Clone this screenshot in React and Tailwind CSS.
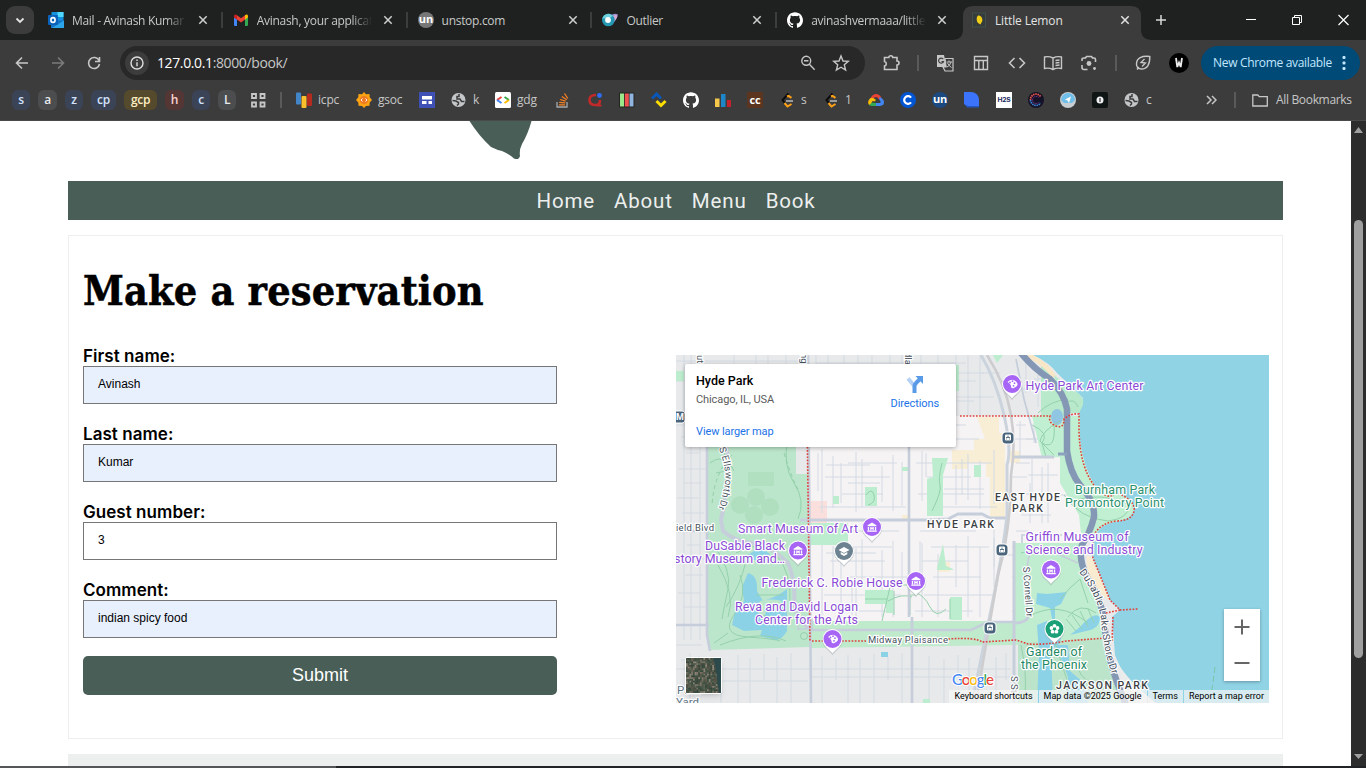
import React from "react";
import { SiGithub } from "react-icons/si";

const ui = "font-['Open_Sans',sans-serif]";

function Close({ bright }) {
  return (
    <svg width="10" height="10" viewBox="0 0 10 10" className="flex-none">
      <path d="M1.300 1.300L8.700 8.700M8.700 1.300L1.300 8.700" stroke={bright ? "#e3e3e3" : "#cfd1d0"} strokeWidth="1.500" />
    </svg>
  );
}

function Outlook() {
  return (
    <svg width="16" height="16" viewBox="0 0 16 16">
      <rect x="3.500" y="0" width="12" height="10" fill="#1490df" />
      <rect x="9.500" y="0" width="6" height="5" fill="#50d9ff" />
      <path d="M3 8.500h13V16H3z" fill="#1572c4" />
      <path d="M4 16L16 8.500V16z" fill="#2ba6ea" />
      <rect x="0" y="3" width="10" height="10" rx="1" fill="#0a62bd" />
      <ellipse cx="5" cy="8" rx="2.100" ry="2.400" fill="none" stroke="#fff" strokeWidth="1.600" />
    </svg>
  );
}
function Gmail() {
  return (
    <svg width="16" height="16" viewBox="0 0 16 16">
      <path d="M1 5v8Q1 14 2 14h2V7z" fill="#4285f4" />
      <path d="M15 5v8q0 1-1 1h-2V7z" fill="#34a853" />
      <path d="M4 3.200L8 6.200l4-3V7.500L8 10.500 4 7.500z" fill="#ea4335" />
      <path d="M12 3.200C13.500 2 15 2.600 15 4.300V5.500l-3 2.200z" fill="#fbbc04" />
      <path d="M4 3.200C2.500 2 1 2.600 1 4.300V5.500l3 2.200z" fill="#c5221f" />
    </svg>
  );
}
function Un({ bg }) {
  return (
    <svg width="16" height="16" viewBox="0 0 16 16">
      <circle cx="8" cy="8" r="8" fill={bg} />
      <text x="8" y="10.700" textAnchor="middle" fontFamily="Open Sans, sans-serif" fontWeight="700" fontSize="11" fill="#fff">un</text>
    </svg>
  );
}
function Outlier() {
  return (
    <svg width="16" height="16" viewBox="0 0 16 16">
      <path d="M8 4Q12 1 15.500 2.200 17 4 10 13z" fill="#9d93cf" />
      <path d="M11 4q3-1.500 4-.5t-2 5z" fill="#d7a8d0" />
      <circle cx="6.300" cy="8" r="6.300" fill="#2497b3" />
      <path d="M.4 6.500A6.300 6.300 0 0 1 11 3.700L8 6z" fill="#6fd0de" />
      <circle cx="6" cy="8" r="2.900" fill="#fff" />
    </svg>
  );
}
function Lemon() {
  return (
    <svg width="16" height="16" viewBox="0 0 16 16" className="flex-none">
      <rect x="1.500" y="1" width="13" height="14" fill="#363b3b" stroke="#41504d" strokeWidth="1" />
      <path d="M7 3.500c3.500 0 4.500 2.500 4.300 5.500L9.500 12.500 7 11C5.500 9 5 5.500 7 3.500z" fill="#f2cf17" />
    </svg>
  );
}

const tabs = [
  { icon: <Outlook />, title: "Mail - Avinash Kumar" },
  { icon: <Gmail />, title: "Avinash, your applicat" },
  { icon: <Un bg="#777" />, title: "unstop.com", noFade: true },
  { icon: <Outlier />, title: "Outlier", noFade: true },
  { icon: <SiGithub size={16} color="#fff" />, title: "avinashvermaaa/little" },
];

function TabStrip() {
  return (
    <div className="flex h-10 bg-[#1f2120]">
      <div className="flex w-[38px] flex-none items-center pl-1.5">
        <div className="flex h-7 w-7 items-center justify-center rounded-[9px] bg-[#3c3c3c]">
          <svg width="10" height="7" viewBox="0 0 10 7"><path d="M1.500 1.500L5 5l3.500-3.500" fill="none" stroke="#e3e3e3" strokeWidth="1.800" /></svg>
        </div>
      </div>
      {tabs.map((t, i) => (
        <div key={i} className="flex w-[184.8px] flex-none items-center pl-2.5">
          <div className="flex h-4 w-4 flex-none items-center">{t.icon}</div>
          <div className={"ml-2 w-[115px] flex-none overflow-hidden pt-px text-[12px] tracking-[-0.3px] whitespace-nowrap text-[#c7c9c8] " + (t.noFade ? "" : "[mask-image:linear-gradient(to_right,black_82%,transparent)]")}>{t.title}</div>
          <div className="ml-[11px] flex w-[10px]"><Close /></div>
          <div className={"ml-auto h-4 w-[2px] " + (i < 4 ? "bg-[#3c3d3d]" : "")} />
        </div>
      ))}
      <div className="flex w-[184.5px] flex-none items-end">
        <svg width="184" height="34" viewBox="0 0 184 34" className="-mr-[184px] flex-none overflow-visible">
          <path d="M-10 34Q1 34 1 23V10Q1 0 11 0H169Q179 0 179 10V23Q179 34 190 34Z" fill="#3c3c3c" />
        </svg>
        <div className="relative flex h-[34px] w-full items-center pb-1.5 pl-[9px]">
          <Lemon />
          <div className="ml-2 w-[125px] pt-px text-[12px] tracking-[-0.15px] text-[#e3e3e3]">Little Lemon</div>
          <Close bright />
        </div>
      </div>
      <div className="flex flex-1 items-center pl-[10px]">
        <svg width="10" height="10" viewBox="0 0 10 10"><path d="M5 0v10M0 5h10" stroke="#d8d8d8" strokeWidth="1.500" /></svg>
        <svg width="104" height="12" viewBox="0 0 104 12" className="ml-[80px]" fill="none" stroke="#fff">
          <path d="M0 5.500h10" />
          <path d="M46.500 3.500h7v7h-7zM48.500 3.500v-2h7v7h-2" />
          <path d="M92.500 1l10 10M102.500 1l-10 10" strokeWidth="1.200" />
        </svg>
      </div>
    </div>
  );
}

function Icon({ children, size = 18, color = "#c7c7c7", className = "" }) {
  return (
    <svg width={size} height={size} viewBox="0 0 18 18" fill="none" stroke={color} strokeWidth="1.600" className={"flex-none " + className}>{children}</svg>
  );
}

function Toolbar() {
  return (
    <div className="flex h-[46px] items-center bg-[#3c3c3c]">
      <Icon className="ml-[13px]"><path d="M15 9H4M9 3.500L3.500 9 9 14.500" /></Icon>
      <Icon className="ml-[18px]" color="#7b7b7b"><path d="M3 9h11M9 3.500l5.500 5.500L9 14.500" /></Icon>
      <Icon className="ml-[18px]"><path d="M14 6.500A5.500 5.500 0 1 0 14.500 10M14.500 3v4.500H10" /></Icon>
      <div className="ml-[17px] flex h-[34px] w-[745px] flex-none items-center rounded-full bg-[#282828]">
        <div className="ml-[5px] flex h-6 w-6 items-center justify-center rounded-full bg-[#3c3c3c]">
          <svg width="14" height="14" viewBox="0 0 14 14" fill="none" stroke="#dedede" strokeWidth="1.400"><circle cx="7" cy="7" r="6" /><path d="M7 6.200v4M7 3.600v1.400" /></svg>
        </div>
        <div className="ml-2 pb-px text-[14px] tracking-[-0.38px] text-[#c7c7c7]"><span className="text-white">127.0.0.1</span>:8000/book/</div>
        <Icon className="ml-auto" size={16}><circle cx="7" cy="6.500" r="5" /><path d="M10.500 10.500L16.500 16.500M4.500 6.500h5" /></Icon>
        <Icon className="mr-[15px] ml-[16px]"><path d="M9 2l2 5 5.300.300-4 3.500 1.300 5.200L9 13.200 4.400 16l1.300-5.200-4-3.500L7 7z" strokeWidth="1.400" /></Icon>
      </div>
      <Icon className="ml-[17px]"><path d="M2.500 3.500h4.300a2 1.800 0 0 1 4 0H15V7a2 2 0 0 1 0 4v4.500H2.500V12a2.300 2.300 0 0 0 0-4.500z" /></Icon>
      <div className="ml-[17px] h-4 w-[2px] bg-[#5a5a5a]" />
      <svg width="18" height="18" viewBox="0 0 18 18" className="ml-[17px] flex-none">
        <path d="M1 1h7l2.500 12H1z" fill="#c7c7c7" /><path d="M9 4.500h8V17H9L7 13h3z" fill="none" stroke="#c7c7c7" strokeWidth="1.200" />
        <path d="M7.200 5.200A2.500 2.500 0 1 0 7.500 7.500H5.500" fill="none" stroke="#3c3c3c" strokeWidth="1.200" />
        <path d="M10.500 8h5.500M13 6.500V8M15 8q-1 4-4 5M11.500 9q1.500 3 4 4.500" fill="none" stroke="#c7c7c7" />
      </svg>
      <Icon className="ml-[18px]"><path d="M2.500 2.500h13v13h-13zM2.500 6.500h13M6.800 6.500v9M11.300 6.500v9" strokeWidth="1.400" /></Icon>
      <Icon className="ml-[18px]"><path d="M6.500 4L1.500 9l5 5M11.500 4l5 5-5 5" /></Icon>
      <svg width="20" height="18" viewBox="0 0 20 18" fill="none" stroke="#c7c7c7" strokeWidth="1.400" className="ml-[17px] flex-none"><path d="M10 4Q6 2 1.500 3v11.500Q6 13.500 10 15.500 14 13.500 18.500 14.500V3Q14 2 10 4zM10 4v11M12.500 6.500l4-.5M12.500 9l4-.5M12.500 11.500l4-.5" /></svg>
      <Icon className="ml-[17px]"><path d="M2 7V5.500Q2 4 4 4h1.500l1-1.500h5l1 1.500H14q1.500 0 1.500 1.500V8M2 11v2.500Q2 15.500 4 15.500H7.500" /><circle cx="9" cy="9.500" r="2.400" fill="#c7c7c7" stroke="none" /><circle cx="14.500" cy="14.500" r="1.400" fill="#c7c7c7" stroke="none" /></Icon>
      <div className="ml-[17px] h-4 w-[2px] bg-[#5a5a5a]" />
      <Icon className="ml-[17px]"><path d="M15.800 2.500C8 1.500 2.500 4 2.500 10c0 3 2 5 5 5 6 0 8.500-5 8.300-12.500zM3 15.500L5 13" strokeWidth="1.400" /><path d="M10.500 5L7 8.500l4.500 .5L8 12.500" strokeWidth="1.300" /></Icon>
      <svg width="20" height="20" viewBox="0 0 20 20" className="ml-[17px] flex-none"><circle cx="10" cy="10" r="10" fill="#000" /><path d="M7 5l1.300 9L10 9.500l1.700 4.500L13 5" stroke="#eee" strokeWidth="1.800" fill="none" /></svg>
      <div className="ml-3 flex h-[34px] w-[159px] flex-none items-center rounded-full bg-[#004a77] pl-3">
        <span className="w-[125px] text-[12px] tracking-[-0.32px] whitespace-nowrap text-[#c2e7ff]">New Chrome available</span>
        <svg width="4" height="16" viewBox="0 0 4 16" fill="#c2e7ff" className="ml-1"><rect x="0.500" y="1" width="3" height="3" rx="1" /><rect x="0.500" y="6.500" width="3" height="3" rx="1" /><rect x="0.500" y="12" width="3" height="3" rx="1" /></svg>
      </div>
    </div>
  );
}

const chips = [
  ["s", "w-[18px] bg-[#3b4357] text-[#d3e3fd]"],
  ["a", "w-[19px] bg-[#4b4d4e] text-[#e8eaed]"],
  ["z", "w-[18px] bg-[#3b4357] text-[#d3e3fd]"],
  ["cp", "w-[25px] bg-[#3b4357] text-[#d3e3fd]"],
  ["gcp", "w-[33px] bg-[#564a2c] text-[#feefc3]"],
  ["h", "w-[19px] bg-[#543735] text-[#fad2cf]"],
  ["c", "w-[18px] bg-[#3b4357] text-[#d3e3fd]"],
  ["L", "w-[18px] bg-[#4b4d4e] text-[#e8eaed]"],
];

const S = ({ children }) => <svg width="16" height="16" viewBox="0 0 16 16" className="flex-none">{children}</svg>;
const Globe = () => (
  <S><circle cx="7.500" cy="8" r="7" fill="#c4c7c9" /><path d="M1.500 8.500L5 9 7.500 10.500v1.500L6 13.500M8 2v2.500H6V7H9L10.500 9.500H13.500" stroke="#3c3c3c" strokeWidth="1.500" fill="none" /></S>
);
const Leet = () => (
  <S><path d="M9.500 1.500L3.500 8 6 11.500" stroke="#0c0c0c" strokeWidth="2" fill="none" /><path d="M8 4.500l1.500-.7 3 2M5.500 11l3 3.500 4-2.500" stroke="#ffa116" strokeWidth="2" fill="none" /><path d="M7 9h7" stroke="#b3b3b3" strokeWidth="1.600" /></S>
);

const bookmarks = [
  { w: "w-[60px]", t: "icpc", icon: <S><rect x="0" y="0.500" width="5" height="12" rx="1" fill="#4285c9" /><rect x="5.500" y="4" width="5" height="12" rx="1" fill="#fbc12d" /><rect x="11" y="1.500" width="5" height="12.500" rx="1" fill="#b52b1e" /></S> },
  { w: "w-[63px]", t: "gsoc", icon: <S><path d="M8 0l2 2.300 3.500-.300.200 3.300L16 8l-2.300 2.500-.200 3.200-3.500.200L8 16l-2-2.100-3.500-.200-.200-3.200L0 8l2.300-2.700L2.500 2l3.500.300z" fill="#fba313" /><circle cx="8" cy="8" r="4" fill="#ee7b23" /><path d="M6.500 6.500L5 8l1.500 1.500M9.500 6.500L11 8 9.500 9.500" stroke="#fff" fill="none" strokeWidth=".9" /></S> },
  { w: "w-[32px]", icon: <S><rect width="16" height="16" fill="#3f51b5" /><path d="M3 4h10v3.500H3zM3 9h4.500v3H3zM9.500 9H13v3H9.500z" fill="#fff" /></S> },
  { w: "w-[44px]", t: "k", icon: <Globe /> },
  { w: "w-[60px]", t: "gdg", icon: <S><rect width="16" height="16" rx="1.500" fill="#fff" /><path d="M6.500 5L2 8" stroke="#ea4335" strokeWidth="2" /><path d="M2 8l4.500 3" stroke="#4285f4" strokeWidth="2" /><path d="M9.500 5L14 8" stroke="#34a853" strokeWidth="2" /><path d="M14 8l-4.500 3" stroke="#fbbc04" strokeWidth="2" /></S> },
  { w: "w-[33px]", icon: <S><g transform="translate(1 0)"><path d="M1 10v5h10v-5" stroke="#a6a9ab" strokeWidth="1.300" fill="none" /><path d="M3 12.800h6M3.200 10.300l6 .600M4 7.500l5.700 1.700M5.800 4.500l5 3.200M8.500 1.500l3.300 5" stroke="#f48024" strokeWidth="1.300" /></g></S> },
  { w: "w-[31px]", icon: <S><path d="M8 3H6.500Q1.500 3.500 1.500 8T6.500 13H8Q12 13 12 8" fill="none" stroke="#c02a2a" strokeWidth="2.600" /><path d="M9 13.500h4.500" stroke="#c02a2a" strokeWidth="2" /><circle cx="11.500" cy="3.500" r="2.400" fill="#2f6df6" /></S> },
  { w: "w-[32px]", icon: <S><rect x="0" y="0.500" width="15.500" height="15" rx="1" fill="#222" /><rect x="1" y="1.500" width="4" height="13" fill="#9be88a" /><rect x="5.800" y="1.500" width="4" height="13" fill="#f0524f" /><rect x="10.500" y="1.500" width="4" height="13" fill="#8fb5dc" /></S> },
  { w: "w-[32px]", icon: <S><path d="M1 6.500L5.500 2 10 6.500" stroke="#0b57b7" strokeWidth="3" fill="none" /><path d="M5.500 9l4.500 4.500L14.500 9" stroke="#fedd00" strokeWidth="3" fill="none" /></S> },
  { w: "w-[32px]", icon: <SiGithub size={16} color="#fff" /> },
  { w: "w-[32px]", icon: <S><rect x="0" y="6.500" width="4.500" height="8.500" fill="#f5c84b" /><rect x="6" y="2" width="4.500" height="13" fill="#1d86c8" /><rect x="12" y="8" width="4" height="7" fill="#c4232c" /></S> },
  { w: "w-[32px]", icon: <S><rect width="16" height="16" rx="1" fill="#5b351e" /><text x="8" y="11.500" textAnchor="middle" fontSize="11" fontWeight="700" fontFamily="Open Sans, sans-serif" fill="#fff">cc</text></S> },
  { w: "w-[44px]", t: "s", icon: <Leet /> },
  { w: "w-[45px]", t: "1", icon: <Leet /> },
  { w: "w-[32px]", icon: <S><path d="M2.500 6.500Q4 2 8.500 2 12.500 2.500 13.500 6.500L11 7.500Q10 5 8 5 6 5 5 6.500z" fill="#ea4335" /><path d="M11 5.500h1.500Q16 7.500 16 10.500T12 14H8v-3h4Q13.500 10 11.500 8z" fill="#4285f4" /><path d="M8 11v3H4Q2 14 1 13l2-2.500z" fill="#34a853" /><path d="M1 13q-2-3 .500-6T8 8L6.500 9.500Q4 8 3.500 11z" fill="#fbbc04" /></S> },
  { w: "w-[32px]", icon: <S><circle cx="8" cy="8" r="8" fill="#0056d2" /><path d="M11 5.700A3.800 3.800 0 1 0 11 10.300" stroke="#fff" strokeWidth="2.200" fill="none" /></S> },
  { w: "w-[32px]", icon: <Un bg="#1c4980" /> },
  { w: "w-[32px]", icon: <S><path d="M0 0h7a8 8 0 0 1 8 8v6H3L0 12z" fill="#3b74fb" /><path d="M0 12l3 3.500h12V14H4z" fill="#2455c4" /></S> },
  { w: "w-[32px]", icon: <S><rect width="16" height="16" fill="#fff" /><text x="8" y="10" textAnchor="middle" fontSize="6" fontWeight="700" textLength="13" lengthAdjust="spacingAndGlyphs" fontFamily="Inter, sans-serif" fill="#1d2b63">H2S</text></S> },
  { w: "w-[32px]", icon: <S><circle cx="8" cy="8" r="8" fill="#141226" /><path d="M12.500 4.500A5.500 5.500 0 0 0 2.500 8" stroke="#e4554a" strokeWidth="1.800" strokeDasharray="1.500 .7" fill="none" /><path d="M2.500 8a5.500 5.500 0 0 0 10 3" stroke="#3d7fd0" strokeWidth="1.800" strokeDasharray="1.500 .7" fill="none" /><path d="M10.500 5.500A3.500 3.500 0 1 0 10.500 10.500" stroke="#8d3aa8" fill="none" strokeDasharray="1 .7" /></S> },
  { w: "w-[32px]", icon: <S><circle cx="8" cy="8" r="8" fill="#c9ced2" /><path d="M1 8a7 7 0 0 1 14 0L12 11H4z" fill="#6fbfe9" /><path d="M5 7.500l6-3-2 6.500-1.500-2.500z" fill="#fff" /></S> },
  { w: "w-[32px]", icon: <S><rect width="16" height="16" rx="2" fill="#0f1515" /><circle cx="8" cy="8" r="3.500" fill="#f1f1f1" /><path d="M8 6v4" stroke="#333" strokeWidth="1.200" /></S> },
  { w: "w-[82px]", t: "c", icon: <Globe /> },
];

function Bookmarks() {
  return (
    <div className="flex h-[35px] items-center border-b border-[#4a4a4a] bg-[#3c3c3c] pb-[6px] pl-3 text-[12px] tracking-[-0.2px] text-[#c7c7c7]">
      <div className="flex flex-none gap-2">
        {chips.map(([t, c], i) => (
          <div key={i} className={"flex h-5 items-center justify-center rounded-[6px] text-[12px] font-semibold tracking-[-0.3px] " + c}>{t}</div>
        ))}
      </div>
      <svg width="16" height="16" viewBox="0 0 16 16" className="ml-[14px] flex-none" fill="none" stroke="#c7c7c7" strokeWidth="1.800"><path d="M2 2h4v4H2zM10.500 2h4v4h-4zM2 10.500h4v4H2zM10.500 10.500h4v4h-4z" /></svg>
      <div className="mr-[14px] ml-[14px] h-4 w-[2px] flex-none bg-[#5a5a5a]" />
      {bookmarks.map((b, i) => (
        <div key={i} className={"flex h-5 flex-none items-center gap-1.5 " + b.w}>
          {b.icon}
          {b.t && <span>{b.t}</span>}
        </div>
      ))}
      <svg width="11" height="10" viewBox="0 0 11 10" fill="none" stroke="#c7c7c7" strokeWidth="1.500" className="flex-none"><path d="M1 1l4 4-4 4M6 1l4 4-4 4" /></svg>
      <div className="ml-[17px] h-4 w-[2px] flex-none bg-[#5a5a5a]" />
      <svg width="16" height="13" viewBox="0 0 16 13" fill="none" stroke="#c7c7c7" strokeWidth="1.300" className="ml-4 flex-none"><path d="M.8 1h5l1.500 1.700h8V12H.8z" /></svg>
      <span className="ml-2 tracking-[-0.33px] whitespace-nowrap">All Bookmarks</span>
    </div>
  );
}

const museum = "M-4 -1.500L0 -4.200 4 -1.500V-.7H-4zM-3.800 0h1.200v3h-1.200zM2.600 0h1.200v3H2.600zM-4.300 3.200h8.600v1.200h-8.600zM-1.600 0h.9l.7 1 .7-1h.9v3h-.9V1.500l-.7.9-.7-.9V3h-.9z";

function Pin({ x, y, fill = "#a765f5", kind = "museum" }) {
  return (
    <g transform={`translate(${x} ${y})`}>
      <path d="M0 15.500C-2 11 -10.200 8.500 -10.200 0A10.200 10.200 0 0 1 10.200 0C10.200 8.500 2 11 0 15.500Z" fill="#9aa0a6" opacity=".45" transform="translate(0 .8)" />
      <path d="M0 14.500C-2 10.500 -10 8 -10 0A10 10 0 0 1 10 0C10 8 2 10.500 0 14.500Z" fill="#fff" />
      <circle r="9" fill={fill} />
      {kind === "museum" && <path d={museum} fill="#fff" transform="scale(1.1)" />}
      {kind === "art" && <g><path d="M-4.500-2Q0-6 4-2.500T2 4Q-1 5-1 2.500T-4.500-2z" fill="#fff" /><g fill={fill}><circle cx="-2" cy="-1.500" r=".9" /><circle cx="0.500" cy="-2.800" r=".9" /><circle cx="2.500" cy="-.8" r=".9" /><circle cx="1.500" cy="1.800" r=".9" /></g></g>}
      {kind === "school" && <path d="M-5.500-1L0-4l5.500 3L0 2zM-3.300 1v2.200L0 5l3.300-1.800V1L0 2.800z" fill="#fff" />}
      {kind === "flower" && <g fill="#fff"><circle cx="0" cy="-3.200" r="1.900" /><circle cx="3" cy="-1" r="1.900" /><circle cx="1.900" cy="2.700" r="1.900" /><circle cx="-1.900" cy="2.700" r="1.900" /><circle cx="-3" cy="-1" r="1.900" /><circle r="1.300" fill={fill} /></g>}
    </g>
  );
}

function Station({ x, y }) {
  return (
    <g transform={`translate(${x} ${y})`}>
      <rect x="-6.500" y="-6.500" width="13" height="13" rx="4.500" fill="#fff" />
      <rect x="-5.500" y="-5.500" width="11" height="11" rx="3.500" fill="#4b667c" />
      <rect x="-3" y="-3.500" width="6" height="6" rx="1" fill="#fff" />
      <path d="M-2-.5h4M0-2.500v2M-1.800 1h.8M1 1h.8M-2 3.800l1-1M2 3.800l-1-1" stroke="#4b667c" strokeWidth=".9" />
    </g>
  );
}

function L({ x, y, c = "#8a4ad6", s = 12.4, a, w, rot, len, children }) {
  return (
    <text x={x} y={y} fill={c} fontSize={s} textAnchor={a} fontWeight={w} textLength={len} transform={rot}
      stroke="#fff" strokeWidth="2.400" strokeLinejoin="round" paintOrder="stroke">{children}</text>
  );
}

const vWest = [8, 15, 24, 58, 80, 92, 110];
const vTown = [146, 157, 165, 180, 186, 206, 217, 226, 246, 262, 280, 292, 304, 318];
const vSouth = [14, 23, 45, 62, 74, 88, 101, 115, 146, 160, 172, 184, 198, 212, 226, 253, 268, 282, 293, 306, 320, 330];
const hTown = [70, 84, 108, 122, 139, 152, 176, 192, 206, 222, 240, 256];
const hWest = [70, 82, 98, 114, 128, 143, 158, 190, 204, 220, 238, 252, 290, 305, 322, 336];
const cuts = [
  [142, 98, 38, 1], [150, 110, 44, 0], [172, 128, 32, 0], [250, 98, 24, 1], [286, 104, 36, 1], [268, 134, 40, 0],
  [244, 186, 40, 1], [150, 198, 50, 0], [176, 226, 34, 1], [318, 172, 40, 1], [320, 200, 20, 0], [344, 66, 36, 1],
  [350, 84, 22, 0], [358, 68, 20, 1], [352, 120, 30, 0], [356, 104, 46, 1], [366, 112, 56, 1], [382, 140, 12, 0],
  [354, 128, 40, 1], [372, 108, 60, 1], [345, 160, 30, 0], [350, 8, 30, 1], [358, 24, 20, 0], [346, 34, 30, 0], [362, 12, 40, 1],
];

function CityMap() {
  return (
    <svg width="593" height="348" viewBox="0 0 593 348" className="col-start-1 row-start-1 block" fontFamily="Roboto, sans-serif" fontSize="12">
      <defs>
        <clipPath id="frame"><rect width="593" height="348" /></clipPath>
      </defs>
      <g clipPath="url(#frame)">
        <rect width="593" height="348" fill="#e8e9eb" />
        <path d="M131 61H400L412 188 350 285H134Z" fill="#f5f3f4" />
        <path d="M301 62h22v16h6v84h-15v-40h-4v-14h-18v6h-16V95h22V84h11zM334 96h10v12h-10zM262 207h12v10h-12zM226 160h6v6h-6z" fill="#f8ecd2" opacity=".9" />
        <path d="M134 146h17v23h-17z" fill="#fadfdd" />

        <g stroke="#d3dae2" strokeWidth="1" fill="none">
          {vWest.map((x) => <path key={x} d={`M${x} 0V70M${x < 30 ? x : -5} 60V285`} />)}
          {[140, 152, 168, 182, 196, 214, 226, 245, 262, 280, 292, 304].map((x, i) => <path key={x} d={`M${x} 0V60M${x} 18h${8 + (i % 4) * 4}M${x} 42h14`} />)}
          {vTown.map((x, i) => <path key={x} d={`M${x} ${94 + (i * 7) % 18}V${158 - (i * 5) % 14}M${x} ${180 + (i * 11) % 20}V${i % 3 === 1 ? 232 : 262}`} />)}
          {vSouth.map((x, i) => <path key={x} d={`M${x} ${298 + (i * 3) % 7}V${i % 4 === 1 ? 325 : 348}`} />)}
          {hTown.map((y, i) => <path key={y} d={`M${138 + (i * 17) % 40} ${y}H${205 + (i * 23) % 30}M${238 + (i * 11) % 20} ${y}H${290 + (i * 13) % 34}M${i % 2 ? 336 : 340} ${y}H${350 + (i * 7) % 10}`} />)}
          {hWest.map((y, i) => <path key={y} d={`M${(i * 5) % 12} ${y}H${30 - (i * 3) % 8}`} />)}
          {cuts.map(([x, y, n, v], i) => <path key={i} d={v ? `M${x} ${y}v${n}` : `M${x} ${y}h${n}`} />)}
          <path d="M0 314H335M134 322H335M36 326h96M0 6h130M0 26h130M140 8h150M250 26h50M238 46h60" />
        </g>

        <path d="M31 70H131L134 292 35 295 31 280Z" fill="#bce6cb" />
        <path d="M120 78h11v41h-11z" fill="#e8e9eb" />
        <path d="M134 266H340V290L134 293Z" fill="#bfeacc" />
        <path d="M338 188H406L412 230 425 256 430 288 338 290Z" fill="#c0edd0" />
        <path d="M342 288L430 283 440 325 456 348H342Z" fill="#bce4ca" />
        <path d="M365 5L390 40 388 61H365z" fill="#b9e9cb" />
        <path d="M0 16h8v10H0zM275 10h8v26h-8zM133 168h39v22h-39zM256 103h16l-5 17v41h-16v-37l6-2zM189 132h12v19h-12zM157 141h6v8h-6zM261 213l6-24 3 22 7 3v1h-16zM189 235h28v23h-7v-9h-21zM274 242h12v23h-12zM298 110h7v12h-7zM226 112h6v4h-6zM247 344h7v4h-7zM317 0h10l-6 8z" fill="#bcedce" />
        <path d="M72 117h26v14H72z" fill="#b0e0c0" /><circle cx="64" cy="150" r="9" fill="#afdfbf" /><circle cx="80" cy="142" r="9" fill="#afdfbf" /><circle cx="78" cy="160" r="9" fill="#afdfbf" /><circle cx="94" cy="152" r="9" fill="#afdfbf" />

        <path d="M357 0Q374 8 381 18L407 43 403 58 404 85Q407 112 419 131 428 137 438 137 457 142 458 154 456 164 442 166 426 168 419 180 414 192 417 203L434 245 444 255 436 262 437 275 439 300 444 312Q458 332 478 348H593V0Z" fill="#90d3e5" />
        <path d="M356 61H404L404 85Q407 112 419 131L438 137Q457 142 458 154 456 164 442 166 426 168 419 180L406 188 403 160 384 128 384 102 366 103Z" fill="#c0efd2" />
        <path d="M352 0Q372 10 378 22" fill="none" stroke="#f8e7c6" strokeWidth="5" />
        <path d="M378 20L399 36Q409 42 407 50L403 58 388 58 384 40Z" fill="#b9e9cb" />
        <path d="M411 200Q410 210 413 218L426 240 434 246 426 226 416 203Z" fill="#f8ebcf" />
        <path d="M438 300Q446 322 452 348H480Q450 324 442 308Z" fill="#ebecec" />

        <g fill="#8cd2e7">
          <ellipse cx="381" cy="62" rx="6" ry="8" fill="#90c6e2" />
          <path d="M72 218q10 2 9 18l6 10q14-4 24-12v42q-6 10-12 9l-15-4 2-6-18 1-12-6 4-18 8-6-2-14z" />
          <path d="M72 200q12-10 22-1l-6 6-12 0z" />
          <path d="M361 238l10 1 20-2-6 12-6 3v12h-3l-2-11-14-4zM404 272q14-16 20-10 0 12-14 14l-16 4z" />
          <path d="M361 270l10-4 4 14 12-8-3 16-9 8 2 52h-16l2-50zM380 290h12l2 26 14 12 4 20h-22l2-26z" />
          <path d="M205 297h7v5h-7z" />
        </g>
        <path d="M84 246q14-3 22 0l-4 10-10-4-4 10-8-6z" fill="#bce6cb" />

        <g fill="none" stroke="#94d1ac" strokeWidth="1">
          <path d="M34 108q10-8 16 0t-10 10M46 94l12 22M38 190q18 26 14 44t-6 30M50 252q14-20 20-46M44 290q40-16 66-4M38 288l14-10M60 198q24-14 40 2t14 52M112 84q-6 26 6 44t4 36M64 220q8 20-6 40t14 22 32 4M80 240h28M84 260l22 4M42 210q18 30 10 52" />
          <path d="M266 108q-4 16-2 22t-8 26M190 140q6-8 8 0t-6 10M189 244h22M214 232l-8 34M218 236v24M226 230h14v10h-6v20M212 246q14-8 24-4M240 238q8 2 14 14t16 2M274 244v20" />
          <path d="M356 70q18 8 10 18l4 14M384 66q-18 10-20 20l14 14M366 88q14 8 12-18M362 58q12-12 30-14M390 48q8-6 12 4M388 140q16 24 44 26 20-2 22-16M400 145q24-8 52 4M345 198q24-8 48 0M384 244q10-12 20-20l8 24M352 262q30-18 60 6M392 262q12-16 28-4M378 284q10 34 20 60M400 276l-10-12M406 274l-10-14M412 272l-8-16M418 268l-6-14M404 300q-8 24 20 30M345 290q6 28 4 50" />
        </g>
        <path d="M56 100Q38 118 36 150M108 98Q116 124 122 134" fill="none" stroke="#92cfa7" strokeDasharray="4 3" />

        <g fill="none" stroke="#c5ceda">
          <path d="M31 60V280L34 296M132 0L135 348M233 0V262M236 262V348M136 275H295L312 267H338M0 270H33M0 176H30" strokeWidth="2.600" />
          <path d="M46 80Q54 98 52 120T45 165L47 176Q58 186 76 188T112 208Q120 226 118 250L124 266 136 275" strokeWidth="4" />
          <path d="M338 186V348M124 165H250L272 164 282 159H306L314 163H330M338 102h40M338 268Q350 268 352 262" strokeWidth="3" />
          <path d="M340 4l8 40 12 44M346 188v-8h40M352 262Q348 230 352 206T384 200l18 8M122 274h14v-10h-14z" strokeWidth="1.700" />
        </g>
        <circle cx="128" cy="281" r="3.500" fill="none" stroke="#94d1ac" />
        <g fill="none">
          <path d="M305 0Q320 25 328 60T331 110V160Q328 190 318 240L296 348" stroke="#cbd3dc" strokeWidth="3" />
          <path d="M311 0Q330 30 335 60T335 120Q335 174 322 220L300 348" stroke="#cdcdd0" strokeWidth="2.600" />
          <path d="M344-3Q358 14 374 24 388 38 391 54V96Q394 118 404 130 419 146 418 162 414 178 406 190 402 204 411 222 428 248 429 275 432 310 452 354" stroke="#8498b6" strokeWidth="6.500" />
          <path d="M382 99h9" stroke="#8da2bf" strokeWidth="3" />
        </g>
        <path d="M131 63L134 286M136 286H150M166 286H190M272 284Q300 282 306 287L340 285 352 289Q370 290 390 286L430 283M284 61H374Q372 68 380 71T388 64Q395 58 403 59V76Q404 112 418 130T440 137Q460 146 458 156T440 166Q426 168 419 178 415 192 417 203L434 245 444 255 462 254M444 255L430 258M437 262L436 286" fill="none" stroke="#e0403a" strokeWidth="1.600" strokeDasharray="1.700 1.500" />
        <path d="M376 0V10M407 39H593M440 268H593" stroke="#9ad9e9" strokeWidth=".7" opacity=".5" />
        <path d="M539 312l-4 30" stroke="#7cc5a8" strokeDasharray="6 3" />

        <L x="349.500" y="35" len="118">Hyde Park Art Center</L>
        <L x="62" y="178" len="120">Smart Museum of Art</L>
        <L x="29" y="195" len="80">DuSable Black</L>
        <L x="109" y="208" a="end">story Museum and…</L>
        <L x="85.500" y="232" len="141">Frederick C. Robie House</L>
        <L x="59" y="256" len="123">Reva and David Logan</L>
        <L x="79" y="269" len="103">Center for the Arts</L>
        <L x="349.500" y="186" len="103">Griffin Museum of</L>
        <L x="349.500" y="199" len="117">Science and Industry</L>
        <L x="399" y="139" c="#2a9170" len="80">Burnham Park</L>
        <L x="389" y="152" c="#2a9170" len="99">Promontory Point</L>
        <L x="350" y="301" c="#208762" len="56">Garden of</L>
        <L x="345" y="314" c="#208762" len="66">the Phoenix</L>
        <L x="319" y="146" c="#3c4043" s={10.500} w="500" len="65">EAST HYDE</L>
        <L x="336" y="157" c="#3c4043" s={10.500} w="500" len="31">PARK</L>
        <L x="251" y="173" c="#3c4043" s={10.500} w="500" len="67">HYDE PARK</L>
        <L x="380" y="334" c="#3c4043" s={10.500} w="500" len="92">JACKSON PARK</L>
        <L x="192" y="288" c="#43505c" s={9.500} len="80">Midway Plaisance</L>
        <L x="0" y="176" c="#43505c" s={9.500} len="38">ield Blvd</L>
        <L x="1" y="339" c="#607586" s={11.500}>Park</L>
        <L x="0" y="351" c="#607586" s={11.500}>Yard</L>
        <path id="ellsworth" d="M43 93Q51 116 49 128T41 158" fill="none" />
        <text fill="#43505c" fontSize="9.500" stroke="#fff" strokeWidth="2.200" paintOrder="stroke"><textPath href="#ellsworth" textLength="63">S Ellsworth Dr</textPath></text>
        <L x="0" y="0" c="#43505c" s={9.500} len="50" rot="translate(347 212) rotate(86)">S Cornell Dr</L>
        <L x="0" y="0" c="#43505c" s={9.500} rot="translate(21 0) rotate(90)">ut</L>
        <L x="0" y="0" c="#43505c" s={9.500} rot="translate(125 -2) rotate(90)">ng</L>
        <L x="0" y="0" c="#43505c" s={9.500} rot="translate(229 -3) rotate(90)">dla</L>
        <L x="0" y="0" c="#43505c" s={9.500} rot="translate(335 321) rotate(90)">S St</L>
        <path id="drive" d="M403 217Q422 242 425 264 427 298 440 330" fill="none" />
        <text fill="#3f4c5a" fontSize="10" stroke="#fff" strokeWidth="2.200" paintOrder="stroke"><textPath href="#drive" textLength="109">DuSable Lake Shore Dr</textPath></text>

        <Pin x={336} y={29} kind="art" />
        <Pin x={196} y={172} />
        <Pin x={122} y={195.500} />
        <Pin x={168} y={196} fill="#6c8290" kind="school" />
        <Pin x={240} y={226} />
        <Pin x={375} y={214.500} />
        <Pin x={156.500} y={284} kind="art" />
        <Pin x={378.500} y={274} kind="flower" fill="#19a077" />
        <Station x={332} y={83} />
        <Station x={326} y={195} />
        <Station x={314} y={273} />
        <rect x="-3" y="56" width="12" height="12" rx="3" fill="#4b667c" stroke="#fff" />
        <text x="0" y="65.300" fontSize="9" fontWeight="700" fill="#fff">M</text>

        <g fontFamily="Lato, sans-serif" fontSize="15" fontWeight="500" stroke="#fff" strokeWidth="2" paintOrder="stroke">
          <text x="276" y="330" textLength="42"><tspan fill="#4285f4">G</tspan><tspan fill="#ea4335">o</tspan><tspan fill="#fbbc04">o</tspan><tspan fill="#4285f4">g</tspan><tspan fill="#34a853">l</tspan><tspan fill="#ea4335">e</tspan></text>
        </g>
      </g>
    </svg>
  );
}

function Satellite() {
  const cells = Array.from({ length: 400 }, (_, i) => i);
  const tones = ["#3f4f40", "#5c6252", "#33453a", "#7d776b", "#4c4f43", "#6b6557", "#3a4e42", "#8d877b", "#38483c", "#5a5548", "#48584a"];
  const noise = (i) => Math.abs(Math.floor(Math.sin(i * 127.1) * 43758)) % 11;
  return (
    <svg width="37" height="37" viewBox="0 0 36 36" className="rounded-[2px] border border-white bg-[#56604f] shadow-md">
      {cells.map((i) => <rect key={i} x={(i % 20) * 1.8} y={Math.floor(i / 20) * 1.8} width="1.9" height="1.9" fill={tones[noise(i + 1)]} />)}
      <path d="M28 0l2 8 2 13 2 15h2V0z" fill="#2c4a4b" />
    </svg>
  );
}

function MapPanel() {
  return (
    <div className="grid h-[348px] w-[593px] overflow-hidden font-['Roboto',sans-serif]">
      <CityMap />
      <div className="z-10 col-start-1 row-start-1 mt-[9px] ml-[9px] flex h-[83px] w-[271px] justify-between rounded-[2px] bg-white pr-[17px] pl-[11px] shadow-[0_1px_4px_rgba(0,0,0,0.3)]">
        <div className="flex flex-col pt-[9px]">
          <span className="text-[12.500px] leading-4 font-medium text-black">Hyde Park</span>
          <span className="mt-[3px] text-[11px] leading-4 tracking-[-0.1px] text-[#5b5b5b]">Chicago, IL, USA</span>
          <span className="mt-4 text-[11px] leading-4 tracking-[-0.1px] text-[#1a73e8]">View larger map</span>
        </div>
        <div className="flex flex-col items-center pt-[10px]">
          <svg width="20" height="20" viewBox="0 0 20 20"><path d="M3 4.500l6 7" stroke="#b3d0f5" strokeWidth="4" /><path d="M9.500 19V12.500Q9.500 10.500 11.500 8.500l4-4" stroke="#5a9be8" strokeWidth="4" fill="none" /><path d="M10.500 2H18v8z" fill="#5a9be8" /></svg>
          <span className="mt-[2px] text-[11px] leading-4 tracking-[-0.1px] text-[#1a73e8]">Directions</span>
        </div>
      </div>
      <div className="z-10 col-start-1 row-start-1 mb-[9px] ml-[9px] self-end justify-self-start"><Satellite /></div>
      <div className="z-10 col-start-1 row-start-1 mr-[9px] mb-[22px] flex h-[72px] w-9 flex-col items-center justify-around self-end justify-self-end bg-white shadow-[0_1px_3px_rgba(0,0,0,0.3)]">
        <svg width="16" height="16" viewBox="0 0 16 16"><path d="M8 .5v15M.5 8h15" stroke="#666" strokeWidth="2" /></svg>
        <svg width="16" height="16" viewBox="0 0 16 16"><path d="M.5 8h15" stroke="#666" strokeWidth="2" /></svg>
      </div>
      <div className="z-10 col-start-1 row-start-1 flex h-[13px] items-center self-end justify-self-end text-[9px] leading-[13px] whitespace-nowrap text-black">
        <span className="bg-[#f5f5f5]/75 px-[5px]">Keyboard shortcuts</span>
        <span className="ml-px bg-[#f5f5f5]/75 px-[5px]">Map data ©2025 Google</span>
        <span className="ml-px bg-[#f5f5f5]/70 px-[5px]">Terms</span>
        <span className="ml-px bg-[#f5f5f5]/70 px-[5px]">Report a map error</span>
      </div>
    </div>
  );
}

function Field({ label, value, plain }) {
  return (
    <label className="flex h-[78px] flex-col">
      <span className="h-[22px] font-['Inter',sans-serif] text-[17px] leading-[24px] font-semibold tracking-[0.05px] text-black">{label}</span>
      <span className={"flex h-[38px] items-center border border-[#767676] pb-[2px] pl-[14px] font-['Liberation_Sans',sans-serif] text-[12px] text-black " + (plain ? "bg-white" : "bg-[#e8f0fe]")}>{value}</span>
    </label>
  );
}

export default function App() {
  return (
    <div className={"flex h-[768px] w-[1366px] flex-col overflow-hidden bg-white " + ui}>
      <TabStrip />
      <Toolbar />
      <Bookmarks />
      <div className="flex h-[645px]">
        <main className="flex w-[1351px] flex-col overflow-hidden bg-white px-[68px]">
          <svg width="1215" height="60" viewBox="68 121 1215 60" className="flex-none">
            <path d="M469.500 121Q479 136 491 147 497 150 502 151 509 154 514 158.500 519 160.500 520 156 519 150 522 144 528 134 531.500 121Z" fill="#495e57" />
          </svg>
          <nav className="flex h-[39px] flex-none items-center justify-center gap-[19px] bg-[#495e57] pt-px pl-px font-['Roboto',sans-serif] text-[20.500px] tracking-[0.85px] text-[#edefee]">
            <a>Home</a><a>About</a><a>Menu</a><a>Book</a>
          </nav>
          <section className="mt-[15px] flex h-[504px] flex-none flex-col border border-[#edefee] pt-[28px] pr-[13px] pl-[14px]">
            <h1 className="h-[54px] font-['DejaVu_Serif_Condensed','DejaVu_Serif',serif] text-[41px] leading-[54px] font-bold tracking-[0.17px] whitespace-nowrap text-black [-webkit-text-stroke:0.5px_black]">Make a reservation</h1>
            <div className="mt-[26px] flex justify-between">
              <form className="flex w-[474px] flex-col">
                <Field label="First name:" value="Avinash" />
                <Field label="Last name:" value="Kumar" />
                <Field label="Guest number:" value="3" plain />
                <Field label="Comment:" value="indian spicy food" />
                <button type="button" className="h-[39px] rounded-[5px] bg-[#495e57] font-['Liberation_Sans',sans-serif] text-[18px] text-white">Submit</button>
              </form>
              <div className="mt-[11px]"><MapPanel /></div>
            </div>
          </section>
          <footer className="mt-[15px] h-3 flex-none bg-[#edefee]" />
        </main>
        <aside className="flex w-[15px] flex-none flex-col items-center bg-[#2c2c2c] pt-[6px]">
          <svg width="9" height="6" viewBox="0 0 9 6"><path d="M4.500 0L9 6H0z" fill="#9f9f9f" /></svg>
          <div className="mt-[87px] h-[438px] w-[9px] rounded-full bg-[#9f9f9f]" />
          <svg width="9" height="6" viewBox="0 0 9 6" className="mt-[96px]"><path d="M4.500 5L9 0H0z" fill="#9f9f9f" /></svg>
        </aside>
      </div>
      <div className="flex h-[2px] bg-[#222326]"><div className="w-[336px] bg-[#555658]" /></div>
    </div>
  );
}
